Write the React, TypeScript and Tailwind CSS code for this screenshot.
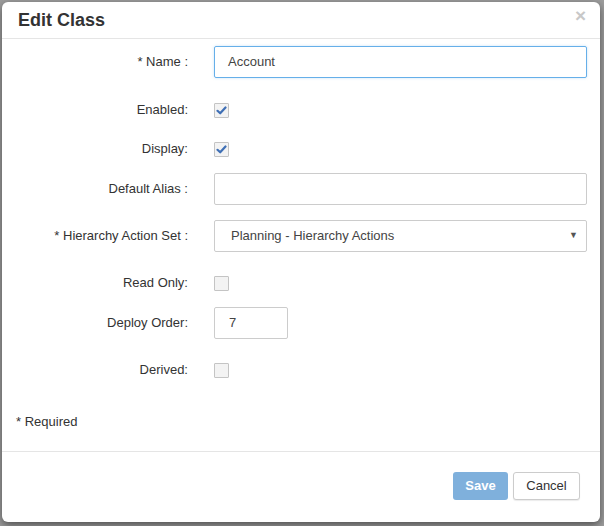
import React from "react";

function Check({ checked }: { checked: boolean }) {
  return (
    <div className="w-[15px] h-[15px] border border-[#c4c4c4] bg-[#f3f3f3] flex items-center justify-center rounded-[1px]">
      {checked && (
        <svg width="11" height="9" viewBox="0 0 11 9">
          <path d="M1.5 4.8 L4.2 7.3 L9.5 1.5" fill="none" stroke="#3f6fb5" strokeWidth="2.2" strokeLinecap="round" strokeLinejoin="round" />
        </svg>
      )}
    </div>
  );
}

function Row({ label, children, className }: { label: string; children: React.ReactNode; className: string }) {
  return (
    <div className={"flex items-center h-[32px] " + className}>
      <div className="w-[172px] text-right text-[13px] text-[#333]">{label}</div>
      <div className="ml-[26px] flex items-center">{children}</div>
    </div>
  );
}

export default function App() {
  return (
    <div className="w-[604px] h-[526px] bg-[#9d9d9d] pl-[2px] pt-[2px] overflow-hidden" style={{ fontFamily: '"Liberation Sans", Arial, sans-serif' }}>
      <div className="w-[598px] h-[520px] bg-white rounded-[6px] shadow-[0_3px_9px_rgba(0,0,0,0.5)] flex flex-col">
        <div className="h-[37px] border-b border-[#e5e5e5] flex items-center justify-between pl-[16px] pr-[14px]">
          <div className="text-[18px] font-bold text-[#333] mt-[1px]">Edit Class</div>
          <div className="text-[19px] font-bold text-[#c8c8c8] leading-none mb-[10px]">×</div>
        </div>
        <div className="flex flex-col pl-[14px] pt-[7px] pb-[19px] border-b border-[#e5e5e5]">
          <Row label="* Name :" className="">
            <div className="w-[373px] h-[32px] border border-[#66afe9] rounded-[2px] flex items-center pl-[13px] text-[13px] text-[#444] shadow-[0_0_3px_rgba(102,175,233,0.35)]">Account</div>
          </Row>
          <Row label="Enabled:" className="mt-[16px]">
            <Check checked={true} />
          </Row>
          <Row label="Display:" className="mt-[7px]">
            <Check checked={true} />
          </Row>
          <Row label="Default Alias :" className="mt-[8px]">
            <div className="w-[373px] h-[32px] border border-[#cccccc] rounded-[2px]"></div>
          </Row>
          <Row label="* Hierarchy Action Set :" className="mt-[15px]">
            <div className="w-[373px] h-[32px] border border-[#cccccc] rounded-[2px] flex items-center justify-between pl-[16px] pr-[8px] text-[13px] text-[#444]">
              <span>Planning - Hierarchy Actions</span>
              <span className="text-[9px] text-[#555]">▼</span>
            </div>
          </Row>
          <Row label="Read Only:" className="mt-[15px]">
            <Check checked={false} />
          </Row>
          <Row label="Deploy Order:" className="mt-[8px]">
            <div className="w-[74px] h-[32px] border border-[#cccccc] rounded-[2px] flex items-center pl-[14px] text-[13px] text-[#444]">7</div>
          </Row>
          <Row label="Derived:" className="mt-[15px]">
            <Check checked={false} />
          </Row>
          <div className="mt-[26px] h-[20px] flex items-center text-[13px] text-[#333]">* Required</div>
        </div>
        <div className="flex justify-end gap-[5px] pt-[20px] pr-[20px]">
          <div className="w-[55px] h-[28px] rounded-[3px] bg-[#7fb0dc] flex items-center justify-center text-white font-bold text-[13px]">Save</div>
          <div className="w-[67px] h-[28px] rounded-[3px] border border-[#cccccc] bg-white flex items-center justify-center text-[#333] text-[13px] shadow-[0_1px_1px_rgba(0,0,0,0.08)]">Cancel</div>
        </div>
      </div>
    </div>
  );
}
